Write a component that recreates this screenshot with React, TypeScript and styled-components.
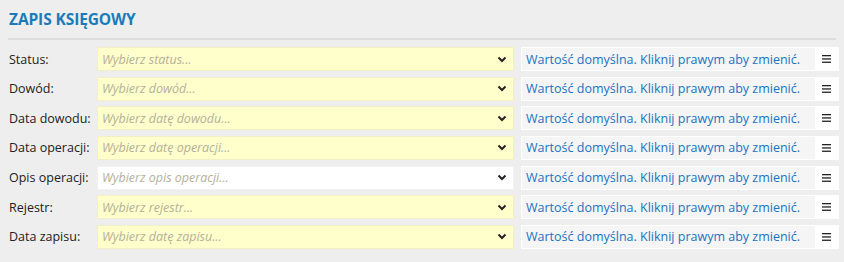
import { FunctionComponent } from 'react';
import styled, { createGlobalStyle } from 'styled-components';

const GlobalStyle = createGlobalStyle`
	html, body {
		margin: 0;
		padding: 0;
		background: #eeeeee;
	}
	body {
		font-family: 'Open Sans', 'Noto Sans', sans-serif;
	}
`;

const Panel = styled.div`
	width: 844px;
	height: 262px;
	box-sizing: border-box;
	padding: 9px 5px 0 9px;
`;

const Title = styled.h2`
	margin: 0;
	font-size: 15.5px;
	font-weight: 700;
	color: #1b7bb9;
	line-height: 20px;
	letter-spacing: -0.1px;
`;

const Separator = styled.div`
	height: 2px;
	background: #dddddd;
	margin: 9px 3px 7px -1px;
`;

const Rows = styled.div`
	display: flex;
	flex-direction: column;
	gap: 5.67px;
`;

const Row = styled.div`
	display: grid;
	grid-template-columns: 88px 424px 318px;
	align-items: center;
	height: 24px;
`;

const Label = styled.span`
	font-size: 12.5px;
	color: #222;
	white-space: nowrap;
`;

const Select = styled.div<{ $white?: boolean }>`
	height: 24px;
	box-sizing: border-box;
	display: flex;
	align-items: center;
	justify-content: space-between;
	padding: 0 6px 0 4px;
	margin-right: 7px;
	background: ${p => (p.$white ? '#ffffff' : '#ffffcc')};
	border: 1px solid ${p => (p.$white ? '#f2f2f2' : '#f0efc6')};
`;

const Placeholder = styled.span`
	font-size: 12.5px;
	font-style: italic;
	color: #b4b09a;
`;

const Chevron = () => (
	<svg width="10" height="7" viewBox="0 0 10 7">
		<path d="M1.5 1.5 L5 5 L8.5 1.5" fill="none" stroke="#222" strokeWidth="2" />
	</svg>
);

const DefaultBox = styled.div`
	height: 24px;
	box-sizing: border-box;
	display: flex;
	border: 1px solid #ffffff;
	background: #ffffff;
`;

const DefaultText = styled.div`
	flex: 1;
	display: flex;
	align-items: center;
	padding-left: 4px;
	background: #f5f5f5;
	color: #1a73c2;
	font-size: 12.5px;
	white-space: nowrap;
`;

const MenuButton = styled.div`
	width: 23px;
	display: flex;
	align-items: center;
	justify-content: center;
`;

const MenuIcon = () => (
	<svg width="9" height="8" viewBox="0 0 9 8">
		<rect x="0" y="0" width="9" height="1.3" fill="#222" />
		<rect x="0" y="3.3" width="9" height="1.3" fill="#222" />
		<rect x="0" y="6.6" width="9" height="1.3" fill="#222" />
	</svg>
);

interface IField {
	label: string;
	placeholder: string;
	white?: boolean;
}

const fields: IField[] = [
	{ label: 'Status:', placeholder: 'Wybierz status...' },
	{ label: 'Dowód:', placeholder: 'Wybierz dowód...' },
	{ label: 'Data dowodu:', placeholder: 'Wybierz datę dowodu...' },
	{ label: 'Data operacji:', placeholder: 'Wybierz datę operacji...' },
	{ label: 'Opis operacji:', placeholder: 'Wybierz opis operacji...', white: true },
	{ label: 'Rejestr:', placeholder: 'Wybierz rejestr...' },
	{ label: 'Data zapisu:', placeholder: 'Wybierz datę zapisu...' },
];

const FieldRow: FunctionComponent<IField> = ({ label, placeholder, white }) => (
	<Row>
		<Label>{label}</Label>
		<Select $white={white}>
			<Placeholder>{placeholder}</Placeholder>
			<Chevron />
		</Select>
		<DefaultBox>
			<DefaultText>Wartość domyślna. Kliknij prawym aby zmienić.</DefaultText>
			<MenuButton>
				<MenuIcon />
			</MenuButton>
		</DefaultBox>
	</Row>
);

const App: FunctionComponent = () => (
	<>
		<GlobalStyle />
		<Panel>
			<Title>ZAPIS KSIĘGOWY</Title>
			<Separator />
			<Rows>
				{fields.map(f => (
					<FieldRow key={f.label} {...f} />
				))}
			</Rows>
		</Panel>
	</>
);

export default App;
